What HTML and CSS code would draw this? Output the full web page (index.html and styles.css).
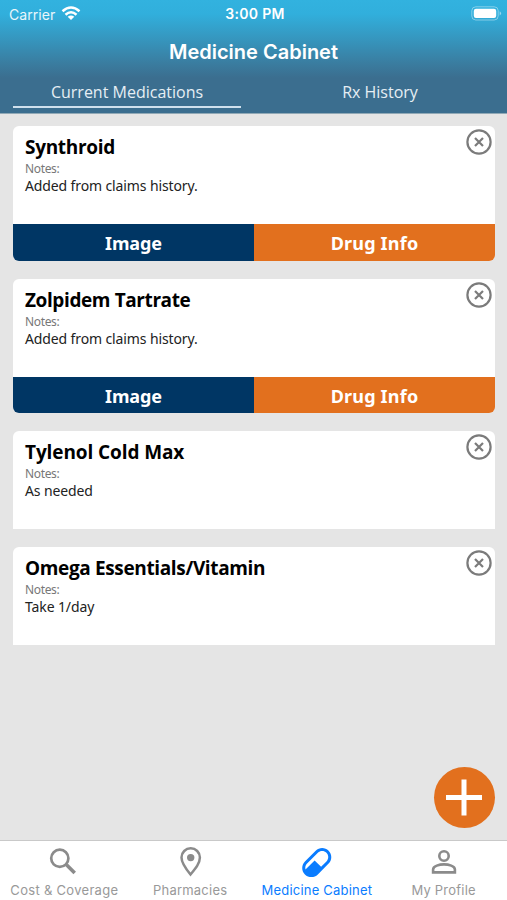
FILE: index.html
```
<!DOCTYPE html>
<html lang="en">
<head>
<meta charset="utf-8">
<title>Medicine Cabinet</title>
<link rel="stylesheet" href="styles.css">
</head>
<body>
<div class="app">
  <header class="header">
    <div class="status">
      <div class="carrier"><span class="carrier-name">Carrier</span>
        <svg class="wifi" width="20" height="15" viewBox="0 0 20 15" fill="none" stroke="#fff" stroke-width="2.5"><path d="M1.5 5.2Q10-2.2 18.5 5.2M4.5 8.7Q10 3.8 15.5 8.7"/><path d="M10 14 6.7 10.8Q10 8 13.3 10.8Z" fill="#fff" stroke="none"/></svg>
      </div>
      <time class="time">3:00 PM</time>
      <svg class="battery" width="31" height="15" viewBox="0 0 31 15"><rect x=".8" y=".8" width="26.4" height="13.2" rx="4" fill="none" stroke="#fff" stroke-opacity=".4"/><rect x="2.8" y="2.8" width="22.4" height="9.2" rx="2.2" fill="#fff"/><path d="M28.7 5.2q2.8 2.2 0 4.4z" fill="#fff" fill-opacity=".5"/></svg>
    </div>
    <h1 class="title">Medicine Cabinet</h1>
    <nav class="tabs">
      <a class="tab active">Current Medications</a>
      <a class="tab">Rx History</a>
    </nav>
  </header>
  <main class="list">
    <article class="card with-actions">
      <div class="body"><h2 class="name n1">Synthroid</h2><p class="label">Notes:</p><p class="note">Added from claims history.</p></div>
      <div class="actions"><button class="image">Image</button><button class="info">Drug Info</button></div>
      <svg class="close" viewBox="0 0 26 26"><circle cx="13" cy="13" r="11.6"/><path d="m9 9 8 8m0-8-8 8"/></svg>
    </article>
    <article class="card with-actions">
      <div class="body"><h2 class="name n2">Zolpidem Tartrate</h2><p class="label">Notes:</p><p class="note">Added from claims history.</p></div>
      <div class="actions"><button class="image">Image</button><button class="info">Drug Info</button></div>
      <svg class="close" viewBox="0 0 26 26"><circle cx="13" cy="13" r="11.6"/><path d="m9 9 8 8m0-8-8 8"/></svg>
    </article>
    <article class="card">
      <div class="body"><h2 class="name n3">Tylenol Cold Max</h2><p class="label">Notes:</p><p class="note">As needed</p></div>
      <svg class="close" viewBox="0 0 26 26"><circle cx="13" cy="13" r="11.6"/><path d="m9 9 8 8m0-8-8 8"/></svg>
    </article>
    <article class="card">
      <div class="body"><h2 class="name n4">Omega Essentials/Vitamin</h2><p class="label">Notes:</p><p class="note">Take 1/day</p></div>
      <svg class="close" viewBox="0 0 26 26"><circle cx="13" cy="13" r="11.6"/><path d="m9 9 8 8m0-8-8 8"/></svg>
    </article>
    <button class="add" aria-label="Add"><svg width="61" height="61" viewBox="0 0 61 61"><path d="M30 12.5v36M12 30.500h36" stroke="#fff" stroke-width="5"/></svg></button>
  </main>
  <nav class="bottom">
    <a class="item"><svg width="32" height="32" viewBox="0 0 32 32" fill="none" stroke="currentColor"><circle cx="12.800" cy="12.300" r="8.600" stroke-width="2.700"/><path d="m19.500 18.800 8.200 8.200" stroke-width="3.600"/></svg><span class="b1">Cost &amp; Coverage</span></a>
    <a class="item"><svg width="32" height="32" viewBox="0 0 32 32"><path d="M16.500 28.500C11 21.800 7.500 17 7.500 11.500a9.200 9.200 0 0 1 18.400 0C25.900 17 22 21.800 16.500 28.500Z" fill="none" stroke="currentColor" stroke-width="2.500"/><circle cx="16.700" cy="11.600" r="3.700" fill="currentColor"/></svg><span class="b2">Pharmacies</span></a>
    <a class="item on"><svg width="32" height="32" viewBox="1.650 1.150 21 21"><path fill="currentColor" d="M4.220 11.290 11.290 4.220C13.640 1.880 17.430 1.880 19.780 4.220 22.120 6.560 22.120 10.360 19.780 12.710L12.710 19.780C10.360 22.120 6.560 22.120 4.220 19.780 1.880 17.440 1.880 13.640 4.220 11.290M5.640 12.710C4.590 13.750 4.240 15.240 4.600 16.570L10.590 10.590 14.830 14.830 18.360 11.290C19.930 9.730 19.930 7.200 18.360 5.640 16.800 4.070 14.270 4.070 12.710 5.640Z"/></svg><span class="b3">Medicine Cabinet</span></a>
    <a class="item"><svg width="32" height="32" viewBox="0 0 32 32" fill="none" stroke="currentColor" stroke-width="2.600"><circle cx="16" cy="10" r="4.700"/><path d="M5.100 26.400v-3c0-3.300 6.200-5 10.900-5s10.900 1.700 10.900 5v3Z"/></svg><span class="b4">My Profile</span></a>
  </nav>
</div>
</body>
</html>
```

FILE: styles.css
```
* { box-sizing: border-box; }
body, h1, h2, p { margin: 0; }
body { background: #e5e5e5; font-family: "Noto Sans", sans-serif; }
button { border: 0; padding: 0; font: inherit; }
.app { height: 900px; display: flex; flex-direction: column; overflow: hidden; }
.header { height: 114px; color: #fff; background: linear-gradient(#32b2df 0, #31afdc 14px, #3695bd 40px, #3a7c9f 64px, #3b6e8f 78px, #3b6e8f 100%); border-bottom: 1px solid #91a9b6; font-family: Inter, sans-serif; }
.status { height: 28px; display: grid; grid-template-columns: 1fr auto 1fr; align-items: center; padding: 0 6px 0 9px; }
.carrier { display: flex; align-items: center; gap: 6px; font-size: 14px; color: #e9f6fb; letter-spacing: .05px; }
.wifi { margin-top: -2px; }
.time { font-size: 14px; font-weight: 600; letter-spacing: .3px; margin-top: -1px; }
.battery { justify-self: end; margin-right: -1px; margin-top: -2px; }
.title { height: 48px; line-height: 48px; text-align: center; font-size: 20px; font-weight: 600; }
.tabs { display: grid; grid-template-columns: 1fr 1fr; padding: 0 13px; column-gap: 25px; font: 16px/33px "Open Sans", sans-serif; color: #e6eef4; }
.tab { height: 32px; text-align: center; }
.tab.active { border-bottom: 2px solid #cfe0ed; }
.list { flex: 1; position: relative; padding: 12px 12px 0 13px; display: flex; flex-direction: column; gap: 18px; }
.card { position: relative; background: #fff; border-radius: 6px 6px 0 0; flex: none; }
.card.with-actions { border-radius: 6px; }
.body { height: 98px; padding: 8px 12px 0; color: #222; }
.name { color: #000; font: 700 19px/26px "Open Sans", sans-serif; }
.n1 { letter-spacing: -.3px; }
.n2 { letter-spacing: -.4px; }
.n3 { letter-spacing: -.1px; }
.n4 { letter-spacing: -.36px; }
.label { font-size: 12px; line-height: 17px; color: #777; letter-spacing: -.35px; }
.note { font-size: 14px; line-height: 18px; letter-spacing: -.12px; }
.actions { height: 36.67px; display: grid; grid-template-columns: 1fr 1fr; border-radius: 0 0 6px 6px; overflow: hidden; color: #fff; font-size: 18px; font-weight: 700; }
.actions button { padding-top: 2px; }
.image { background: #003664; color: inherit; letter-spacing: -.1px; }
.info { background: #e2701e; color: inherit; letter-spacing: .2px; }
.close { position: absolute; width: 26px; height: 26px; top: 3px; right: 3px; fill: none; stroke: #7b7b7b; stroke-width: 2.2; }
.add { position: absolute; right: 12px; bottom: 12px; width: 61px; height: 61px; border-radius: 50%; background: #e2701e; }
.add svg { display: block; }
.bottom { height: 60px; background: #fff; border-top: 1px solid #c9c9c9; display: grid; grid-template-columns: repeat(4, 1fr); }
.item { display: flex; flex-direction: column; align-items: center; padding-top: 5px; color: #8b8b8b; font: 13px/16px Inter, sans-serif; white-space: nowrap; }
.item svg { flex: none; margin-bottom: 4px; }
.item span { color: #999; letter-spacing: .22px; }
.item .b1 { letter-spacing: .3px; padding-left: 2px; }
.item.on, .item.on span { color: #0a7cff; }
```
